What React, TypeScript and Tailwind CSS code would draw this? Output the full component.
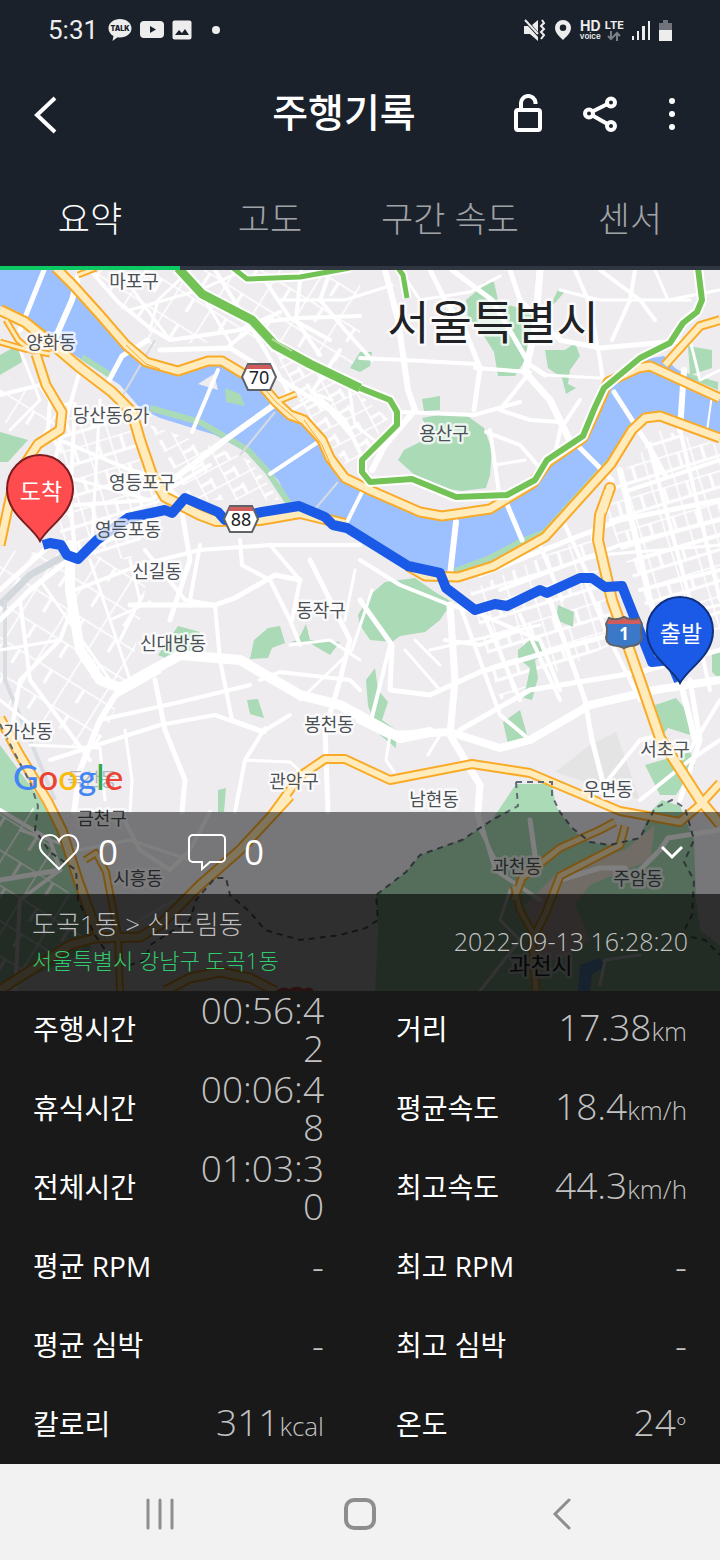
import React, { useState } from 'react';

type Tone = 'major' | 'minor' | 'city';

interface MapLabel {
  text: string;
  x: number;
  y: number;
  tone: Tone;
}

interface Stat {
  label: string;
  value: string;
  unit?: string;
}

const TABS = ['요약', '고도', '구간 속도', '센서'];

const STATS: Stat[] = [
  { label: '주행시간', value: '00:56:42' },
  { label: '거리', value: '17.38', unit: 'km' },
  { label: '휴식시간', value: '00:06:48' },
  { label: '평균속도', value: '18.4', unit: 'km/h' },
  { label: '전체시간', value: '01:03:30' },
  { label: '최고속도', value: '44.3', unit: 'km/h' },
  { label: '평균 RPM', value: '-' },
  { label: '최고 RPM', value: '-' },
  { label: '평균 심박', value: '-' },
  { label: '최고 심박', value: '-' },
  { label: '칼로리', value: '311', unit: 'kcal' },
  { label: '온도', value: '24', unit: '°' },
];

const LABELS: MapLabel[] = [
  { text: '마포구', x: 134, y: 288, tone: 'minor' },
  { text: '양화동', x: 51, y: 349, tone: 'minor' },
  { text: '당산동6가', x: 111, y: 422, tone: 'minor' },
  { text: '영등포구', x: 142, y: 489, tone: 'minor' },
  { text: '영등포동', x: 128, y: 536, tone: 'minor' },
  { text: '용산구', x: 444, y: 440, tone: 'minor' },
  { text: '신길동', x: 157, y: 578, tone: 'minor' },
  { text: '동작구', x: 321, y: 617, tone: 'minor' },
  { text: '신대방동', x: 173, y: 650, tone: 'minor' },
  { text: '가산동', x: 28, y: 738, tone: 'minor' },
  { text: '봉천동', x: 329, y: 731, tone: 'minor' },
  { text: '관악구', x: 294, y: 788, tone: 'minor' },
  { text: '남현동', x: 434, y: 806, tone: 'minor' },
  { text: '우면동', x: 608, y: 796, tone: 'minor' },
  { text: '서초구', x: 665, y: 756, tone: 'minor' },
  { text: '금천구', x: 102, y: 825, tone: 'minor' },
  { text: '시흥동', x: 138, y: 885, tone: 'minor' },
  { text: '과천동', x: 517, y: 873, tone: 'minor' },
  { text: '주암동', x: 638, y: 885, tone: 'minor' },
  { text: '과천시', x: 541, y: 974, tone: 'city' },
  { text: '서울특별시', x: 493, y: 339, tone: 'major' },
];

const LABEL_CLASS: Record<Tone, string> = {
  major: 'fill-[#202124] text-[46px]',
  city: 'fill-[#26272a] text-[23px]',
  minor: 'fill-[#4b5056] text-[18px]',
};

const RIVER =
  'M0 270H58L100 317L140 362L178 373L220 362L255 382L290 417L320 437L333 468L345 482L372 494L440 520L490 511L535 486L548 466L583 442L598 410L612 388L640 360L664 356L675 368L720 396V438L680 421L652 416L637 428L611 464L545 535L520 545L495 560L455 573L410 566L345 526L300 505L290 503L278 480L256 457L215 435L160 418L140 408L120 385L70 352L28 325L0 306Z';

const PARKS = [
  'M404 450L420 442L428 430L422 418L438 415H466L484 428L492 450L490 475L486 488L462 491L440 488L418 478L398 460Z',
  'M422 399L440 396V410L424 411Z',
  'M466 300L478 290L484 282L494 282L498 300L512 306L536 312L525 360L515 376L498 376L494 352L480 330L468 318Z',
  'M550 306L558 290L566 290L556 302Z',
  'M545 350L565 350L575 343L580 356L570 370L568 384L576 388L566 394L562 378L548 368Z',
  'M358 615L370 595L385 582L415 578L435 592L452 602L440 620L425 632L400 636L392 642L370 640L360 625Z',
  'M250 659L254 640L268 628L280 626L285 643L272 648L268 658Z',
  'M290 642L298 640L306 624L310 640L340 642L330 655L308 642Z',
  'M178 626L200 632L196 655L170 660L158 655Z',
  'M247 700L258 699L264 718L250 714Z',
  'M218 790L226 788L224 812H218Z',
  'M518 650L530 640L540 642L545 655L535 660L538 678L532 700L524 698L530 668L518 658Z',
  'M503 722L520 710L528 738L508 744Z',
  'M558 605L574 612L573 627L556 620Z',
  'M366 680L375 668L378 690L388 702L382 720L396 730L396 748L380 735L368 706Z',
  'M655 705L676 698L688 712L690 735L668 728L660 738Z',
  'M712 650H720V680L712 672Z',
  'M645 765L690 752L695 765L676 795H660Z',
  'M690 375L688 346L712 350V368Z',
  'M670 368L718 382V390L674 372Z',
  'M0 355L18 345L22 362L0 375Z',
  'M0 432L28 440L8 462H0Z',
  'M350 368L360 352L372 352L370 366L360 372Z',
  'M0 745L26 780L50 812L60 838L95 930L90 950L0 991Z',
  'M516 784L552 784L556 806L572 830L590 842L610 845L640 838L650 812L662 800L680 806L694 840L696 900L700 930L720 945V991H375L378 930L376 895L406 872L420 855L462 840L492 820Z',
];

// Built-up blocks shown in a slightly different grey or beige
const BLOCKS: [string, string][] = [
  ['M555 772L590 745L616 732L640 800L610 790Z', '#e5e4e5'],
  ['M525 905L560 870L625 850L655 825L650 860L590 885L575 905L590 940L560 960H540Z', '#e4d8cf'],
  ['M580 965L600 958L606 966L592 975L590 991H578Z', '#6ea8e0'],
];

// [path, width]
const STREETS: [string, number][] = [
  // bridges
  ['M44 270L20 330', 5],
  ['M80 270L72 300L50 350', 6],
  ['M148 340L122 356L105 388', 5],
  ['M218 370L192 432', 4],
  ['M288 395L225 440L175 478', 6],
  ['M318 442L270 474', 4],
  ['M362 492L346 524', 4],
  ['M456 522L450 575', 6],
  ['M506 502L522 540', 5],
  ['M578 446L612 480', 5],
  ['M614 392L650 448L665 475', 5],
  ['M684 370L680 430', 6],
  ['M712 395L706 438', 2],
  // north bank
  ['M90 270L118 302L150 328L170 340L240 330L280 312', 4],
  ['M120 270L140 300L170 340', 3],
  ['M130 310L200 290L240 272', 3],
  ['M150 330L158 300L190 270', 3],
  ['M160 350L230 348L330 410L352 435', 5],
  ['M230 345L260 322L300 318L360 316', 4],
  ['M200 292L232 345', 3],
  ['M215 270L262 345L290 395', 4],
  ['M262 276L290 318L330 340', 4],
  ['M300 280L296 320L320 355', 4],
  ['M330 272L320 300L345 330L372 360', 4],
  ['M280 300L345 300L392 285', 3],
  ['M340 350L312 392L345 420L360 452', 4],
  ['M292 410L318 395L332 400', 3],
  ['M348 380L355 425L380 445', 3],
  ['M385 270L398 320L408 390L415 410', 6],
  ['M360 358L405 360L475 364', 4],
  ['M430 270L445 300L465 330L480 368L474 410', 5],
  ['M452 270L492 300L530 365L545 375', 5],
  ['M510 270L520 300L560 340L600 348L690 340', 5],
  ['M540 270L535 330L525 372L550 400L572 445', 7],
  ['M475 368L530 372L500 410L530 420L560 422', 4],
  ['M400 412L474 415L520 402', 4],
  ['M415 410L385 445L372 470', 6],
  ['M490 430L500 500', 4],
  ['M486 432L520 445L540 468', 4],
  ['M495 465L525 460', 3],
  ['M575 270L590 305L600 360L604 388', 4],
  ['M600 270L640 300L655 320', 4],
  ['M560 290L600 300L690 300', 3],
  ['M635 270L630 300L612 340', 4],
  ['M655 270L668 300L720 290', 3],
  ['M580 400L560 430L556 450', 4],
  ['M545 375L600 378', 3],
  ['M690 340L700 380L720 370', 3],
  ['M400 270L420 300L470 292L500 276', 3],
  // west
  ['M0 395L40 385L50 400L48 430L60 450', 4],
  ['M20 350L40 400L10 430', 3],
  ['M80 370L60 440L50 480', 4],
  ['M60 440L130 470L170 480', 4],
  ['M75 405L70 500L75 550', 4],
  ['M100 400L92 540', 3],
  ['M60 475L150 500', 3],
  ['M75 505L150 500L210 465', 4],
  ['M160 480L180 500L190 560L170 620', 5],
  ['M0 620L30 590L75 555L130 530', 5],
  ['M0 590L50 545', 5],
  ['M70 545L70 590L80 650L100 680L120 688L180 655L240 660L300 695L340 705L400 738L430 732', 10],
  ['M120 688L100 720L80 770L74 812', 6],
  ['M75 600L60 640L20 680L10 740', 4],
  ['M20 600L30 680L60 720L90 760', 4],
  ['M40 580L110 680', 3],
  ['M0 650L60 640', 3],
  ['M90 560L110 620L130 680', 3],
  ['M130 560L140 600L120 640', 3],
  ['M75 590L140 565L200 550L270 545L360 545', 4],
  ['M130 605L215 605L235 598L275 575L300 580', 5],
  ['M110 620L150 602', 3],
  ['M145 550L185 600L215 605L220 660L232 720L265 732', 4],
  ['M200 545L190 600', 4],
  ['M240 540L242 565L270 580L290 620L300 645', 4],
  ['M270 545L300 580L292 620', 4],
  ['M310 560L330 600L350 640L340 680L325 730L328 812', 5],
  ['M290 645L330 640L360 660', 3],
  ['M260 680L280 672L350 680L360 690', 4],
  ['M100 720L180 702L250 685', 4],
  ['M110 700L160 672', 3],
  ['M50 760L160 725L215 715L262 732', 4],
  ['M155 680L165 730L185 780L182 812', 5],
  ['M125 730L132 780L130 812', 3],
  ['M265 728L245 760L235 812', 4],
  ['M245 760L290 762L310 780', 3],
  ['M290 715L262 732', 4],
  ['M0 700L50 740', 3],
  ['M30 745L100 748L105 800', 3],
  ['M355 570L345 620', 3],
  ['M300 700L352 650L372 590', 3],
  // south-east
  ['M360 560L400 585L450 605L475 612L540 640L560 690', 4],
  ['M360 600L392 645L390 690L430 695L480 672L555 650L610 635', 5],
  ['M390 645L370 725', 4],
  ['M360 720L390 735L450 732L500 748L530 740L590 705L655 690L720 680', 8],
  ['M450 605L455 680L450 735L480 785L478 812', 7],
  ['M458 600L500 715L530 740', 4],
  ['M480 605L520 700', 4],
  ['M520 615L560 700', 4],
  ['M548 595L585 700L592 740L605 790', 5],
  ['M585 580L610 640L640 700', 4],
  ['M430 650L540 625', 3],
  ['M445 640L480 645L520 630', 4],
  ['M460 730L530 690L640 672L720 650', 5],
  ['M405 650L440 690', 3],
  ['M415 640L440 665', 3],
  ['M480 575L620 520L720 500', 5],
  ['M500 590L620 545L720 520', 4],
  ['M540 545L562 600', 4],
  ['M565 525L590 580', 4],
  ['M620 470L650 600L680 680L695 740', 6],
  ['M650 450L690 600L710 690', 4],
  ['M680 430L720 600', 4],
  ['M630 490L720 460', 4],
  ['M635 560L720 535', 4],
  ['M640 590L720 570', 4],
  ['M650 620L720 605', 3],
  ['M580 560L600 555L720 545', 3],
  ['M690 680L700 740L680 800', 5],
  ['M640 800L690 760L720 740', 4],
  ['M600 790L640 740L660 735', 4],
  ['M720 700L690 750', 4],
  ['M390 735L386 760L394 772', 3],
  ['M440 735L428 755', 3],
  // south
  ['M0 810L50 840L60 870L20 900L15 991', 4],
  ['M0 880L60 870', 5],
  ['M20 830L80 850L130 840L190 860', 3],
  ['M120 812L140 850L170 870L190 850L210 812', 4],
  ['M95 960L140 920L175 900', 3],
  ['M478 812L495 870L540 900', 4],
  ['M530 820L535 855', 5],
  ['M560 880L600 868L625 868', 5],
  ['M640 870L660 850L668 838L720 830', 5],
  ['M480 991L520 940L500 920L510 890', 3],
  ['M600 985L605 960L640 955', 3],
  ['M476 812L480 830L500 868', 3],
];

const HIGHWAYS: [string, number][] = [
  ['M56 268L72 284L100 315L126 345L146 362L178 371L208 361L222 361L242 373L258 381L276 402L290 415L304 420L322 440L330 458L345 478L372 491L420 512L442 516L490 509L533 483L548 462L583 438L596 410L608 382L638 368L650 366L720 398', 7],
  ['M665 365L700 326L720 320', 6],
  ['M408 566L425 576L458 577L493 566L545 537L611 464L632 430L645 418L660 416L720 438', 7],
  ['M610 488L600 515L598 540L612 600L640 680L660 738L700 800L720 824', 8],
  ['M0 310L25 322L45 338L78 366L112 392L132 412L140 440L152 475L165 497L200 515L216 521L260 520L300 513L345 524', 8],
  ['M36 354L46 385L62 412L60 430L38 444L14 480L0 545', 7],
  ['M6 320L18 340L30 350L50 354', 3],
  ['M0 342L28 350', 3],
  ['M78 275L96 268', 3],
  ['M276 402L296 394', 3],
  ['M0 718L18 752L48 802L62 830L78 880L98 935', 7],
  ['M290 796L240 850L200 885L160 925L140 937L95 938L70 945L0 990', 7],
  ['M268 820L300 776L325 759L345 759L390 780L472 764L530 773L620 811L680 822L700 805L720 783', 6],
  ['M85 860L96 853L106 872L118 935L120 991', 4],
  ['M165 991L190 978L220 972L250 978L275 991', 7],
  ['M514 900L522 878L560 848L600 830L615 822', 5],
  ['M514 886L520 910L534 935', 4],
  ['M625 826L620 845L560 876L545 915L532 940L536 991', 5],
];

const GREENWAYS: [string, number][] = [
  ['M178 268L202 294L252 320L275 345L310 364L360 388', 9],
  ['M360 388L390 400L397 412V425L362 460V472L370 482L412 479L456 497L507 495L535 480L547 460L583 436L595 407L604 388L640 358L670 343L683 323L697 312L702 300L698 268', 6],
  ['M233 268L247 279L300 277L350 268', 5],
  ['M398 268L403 275L407 298', 5],
];

const BORDERS =
  'M516 782H552V796L560 812L572 828L590 842L610 845L640 838L655 808L672 800L685 808L694 840L684 862L694 880L692 915L682 935L705 940L720 955M516 782L518 806L492 820L462 840L420 855L406 872L376 895L378 920L366 928L340 935L300 940L265 930L250 912L230 895L226 878L215 878L196 900L190 920L150 945L145 960L130 965M0 724L14 752L30 782L38 806L35 830L50 852L76 870L78 900L95 935L105 950';

const ROUTE =
  'M43 545L50 543L61 545L67 555L78 559L97 540L128 518L165 510L172 513L185 498L218 512L225 520L262 512L299 506L325 517L333 525L347 528L408 566L440 573L446 588L475 610L495 604L507 606L540 590L547 593L580 578L592 578L605 587L622 586L652 662L670 660L679 681';

function RouteMap() {
  return (
    <svg viewBox="0 270 720 721" className="block w-full" role="img" aria-label="주행 경로 지도">
      <defs>
        <pattern id="blocks-a" width="26" height="19" patternUnits="userSpaceOnUse" patternTransform="rotate(-28)">
          <path d="M0 0H26M0 0V19M13 8V19M0 11H13" fill="none" stroke="#fff" strokeWidth="3" />
        </pattern>
        <pattern id="blocks-b" width="24" height="30" patternUnits="userSpaceOnUse" patternTransform="rotate(-17)">
          <path d="M0 0H24M0 0V30M12 0V16M0 16H24" fill="none" stroke="#fff" strokeWidth="3" />
        </pattern>
        <pattern id="blocks-c" width="38" height="30" patternUnits="userSpaceOnUse" patternTransform="rotate(32)">
          <path d="M0 0H38M0 0V30M19 0V16" fill="none" stroke="#fff" strokeWidth="3" />
        </pattern>
      </defs>

      <rect x="0" y="270" width="720" height="721" fill="#efecf0" />

      {/* Dense street grids */}
      <path d="M60 400L125 410L160 500L130 560L60 550Z" fill="url(#blocks-b)" />
      <path d="M150 425L250 460L280 500L190 500Z" fill="url(#blocks-a)" />
      <path d="M0 370L60 420L40 440L0 420Z" fill="url(#blocks-c)" />
      <path d="M0 550L150 560L130 680L90 760L0 700Z" fill="url(#blocks-c)" />
      <path d="M90 270H360V370L270 340L150 345Z" fill="url(#blocks-c)" />
      <path d="M600 500L660 430L720 445V640H660Z" fill="url(#blocks-b)" />
      <path d="M470 590L600 530L620 640L500 700Z" fill="url(#blocks-b)" />
      <path d="M270 350L360 395L390 420L350 470L310 420Z" fill="url(#blocks-a)" />

      {PARKS.map((d) => (
        <path key={d} d={d} fill="#abdab7" />
      ))}
      {BLOCKS.map(([d, fill]) => (
        <path key={d} d={d} fill={fill} />
      ))}
      <path d="M0 812L30 800L60 870L90 950L0 985Z" fill="url(#blocks-c)" />
      <path d={RIVER} fill="#9dc1ff" />
      <path d="M150 408L200 422L248 450L268 472M82 357L110 375M268 472L290 505M455 571L490 558L520 542L545 532L608 462" fill="none" stroke="#abdab7" strokeWidth="6" />
      <path d="M225 388L240 394L245 406L226 402Z" fill="#abdab7" />
      <path d="M198 384L214 374L218 390Z" fill="#efecf0" />
      <path d="M155 340L120 400M275 412L240 455M338 482L310 515" fill="none" stroke="#d5dbe0" strokeWidth="2" />

      {/* Railways */}
      <path d="M0 605L30 575L75 550" fill="none" stroke="#d3d8dd" strokeWidth="7" />
      <path d="M5 600V680L30 740L55 800" fill="none" stroke="#d9dde2" strokeWidth="4" />

      <g fill="none" stroke="#fff" strokeLinejoin="round" strokeLinecap="round">
        {STREETS.map(([d, width]) => (
          <path key={d} d={d} strokeWidth={width} />
        ))}
      </g>

      <g fill="none" stroke="#f9ab28" strokeLinejoin="round">
        {HIGHWAYS.map(([d, width]) => (
          <path key={d} d={d} strokeWidth={width + 4} />
        ))}
      </g>
      <g fill="none" stroke="#ffebbb" strokeLinejoin="round">
        {HIGHWAYS.map(([d, width]) => (
          <path key={d} d={d} strokeWidth={width} />
        ))}
      </g>
      <path d="M126 345L146 364L160 369M258 381L276 402L304 426M304 420L322 445L332 468" fill="none" stroke="#f9ab28" strokeWidth="1" />
      <circle cx="610" cy="488" r="5" fill="#ffebbb" stroke="#f9ab28" strokeWidth="2" />
      <path d="M609 490L602 512" stroke="#ffebbb" strokeWidth="8" />

      <g fill="none" strokeLinejoin="round">
        {GREENWAYS.map(([d, width]) => (
          <path key={d} d={d} strokeWidth={width + 4} stroke="#fff" />
        ))}
        {GREENWAYS.map(([d, width]) => (
          <path key={d} d={d} strokeWidth={width} stroke="#72c256" />
        ))}
      </g>
      <path d="M272 339L292 351" stroke="#b9dfa8" strokeWidth="2" />

      <path d={BORDERS} fill="none" stroke="#5f6a72" strokeWidth="2" strokeDasharray="6 5" />

      <path d={ROUTE} fill="none" stroke="#1b5ae6" strokeWidth="10" strokeLinejoin="round" />

      {/* Road shields */}
      <g stroke="#5f6368" strokeWidth="2">
        <path d="M248 364H270L276 377L270 390H248L242 377Z" fill="#fff" />
        <path d="M230 506H252L258 519L252 532H230L224 519Z" fill="#fff" />
      </g>
      <path d="M248 365H270L272 369H246ZM230 507H252L254 511H228Z" fill="#d05c5c" />
      <g textAnchor="middle" className="fill-[#202124] font-['Noto_Sans',sans-serif] text-[18px]">
        <text x="259" y="384">70</text>
        <text x="241" y="526">88</text>
      </g>
      <path d="M609 618Q616 621 624 617Q632 621 639 618L642 624Q640 630 642 638Q640 646 630 646Q626 647 624 648Q622 647 618 646Q607 646 606 638Q608 630 606 624Z" fill="#3b78c8" stroke="#5f6368" strokeWidth="2" />
      <path d="M609 619Q616 622 624 618Q632 622 639 619L641 624H607Z" fill="#d05c5c" />
      <text x="624" y="640" textAnchor="middle" className="fill-white font-['Noto_Sans',sans-serif] text-[17px] font-bold">1</text>
      <path d="M276 991Q282 985 290 989Q296 984 304 989Q310 985 314 991Z" fill="#d05c5c" />

      <g textAnchor="middle" stroke="#fff" strokeOpacity="0.75" strokeWidth="5" strokeLinejoin="round" paintOrder="stroke">
        {LABELS.map((label) => (
          <text key={label.text} x={label.x} y={label.y} className={LABEL_CLASS[label.tone]}>
            {label.text}
          </text>
        ))}
      </g>

      {/* Finish and start pins */}
      <path d="M40 541C32 526 7 514 7 489A33 34 0 0 1 73 489C73 514 48 526 40 541Z" fill="#ff4c4f" stroke="#7a1d20" strokeWidth="2" />
      <path d="M680 683C672 668 647 656 647 631A33 34 0 0 1 713 631C713 656 688 668 680 683Z" fill="#1b5ae6" stroke="#10307c" strokeWidth="2" />
      <g textAnchor="middle" className="fill-white text-[23px]">
        <text x="41" y="500">도착</text>
        <text x="681" y="642">출발</text>
      </g>

      <text x="92" y="786" textAnchor="middle" className="fill-[#b3b5b8] text-[18px]">독산동</text>
      <text x="13" y="790" className="font-['Lato',sans-serif] text-[35px] font-medium">
        <tspan fill="#4285f4">G</tspan>
        <tspan fill="#ea4335">o</tspan>
        <tspan fill="#fbbc05">o</tspan>
        <tspan fill="#4285f4">g</tspan>
        <tspan fill="#34a853">l</tspan>
        <tspan fill="#ea4335">e</tspan>
      </text>
    </svg>
  );
}

function StatusBar() {
  return (
    <div className="flex h-[60px] items-center justify-between px-12 text-[#ededed]">
      <div className="flex items-center gap-2">
        <span className="w-[52px] font-['Roboto',sans-serif] text-[26px] leading-none">5:31</span>
        <svg width="24" height="24" viewBox="0 0 24 24" fill="currentColor">
          <path d="M12 1C5.600 1 .5 5 .5 10.300c0 3.400 2 6.200 5 7.800l-1 4.900 5-3.700c.8.200 1.600.2 2.500.2 6.400 0 11.500-4 11.500-9.200S18.400 1 12 1z" />
          <text x="12" y="13" textAnchor="middle" className="fill-[#1b212b] font-['Inter',sans-serif] text-[7px] font-black">TALK</text>
        </svg>
        <svg width="24" height="18" viewBox="0 0 24 18">
          <rect width="24" height="17" rx="4" fill="currentColor" />
          <path d="M10 5v7l6-3.500z" fill="#1b212b" />
        </svg>
        <svg width="20" height="20" viewBox="0 0 20 20">
          <rect x="0.500" y="0.500" width="19" height="19" rx="2" fill="currentColor" />
          <path d="M3 15l4-5 3 3 3-4 4 6z" fill="#1b212b" />
        </svg>
        <span className="ml-3 size-2 rounded-full bg-current" />
      </div>
      <div className="flex items-center gap-2">
        <svg width="22" height="22" viewBox="0 0 22 22" fill="currentColor">
          <path d="M0 7h4l10 11v4L6 15H0zM14 1v12L8 6z" />
          <path d="M1 1l13 14" stroke="currentColor" strokeWidth="2" />
          <path d="M18 1l2 3-3 3 3 3-3 3 3 3-3 4" fill="none" stroke="currentColor" strokeWidth="2" />
        </svg>
        <svg width="18" height="22" viewBox="0 0 18 22">
          <path fillRule="evenodd" fill="currentColor" d="M9 1a8 8 0 0 0-8 8c0 5 5 9 8 12 3-3 8-7 8-12a8 8 0 0 0-8-8zm0 4.500a3 3 0 1 1 0 6.500 3 3 0 0 1 0-6.500z" />
        </svg>
        <span className="flex flex-col items-center font-['Inter',sans-serif]">
          <span className="text-[14px] leading-[12px] font-bold">HD</span>
          <span className="text-[8px] leading-[8px] font-semibold">voice</span>
        </span>
        <span className="-ml-1 flex flex-col items-center font-['Inter',sans-serif]">
          <span className="text-[11px] leading-[11px] font-bold">LTE</span>
          <svg width="14" height="10" viewBox="0 0 14 10" fill="none" stroke="#7b7f86" strokeWidth="2">
            <path d="M4 0v8M1 5l3 3 3-3M10 10V2M7 5l3-3 3 3" />
          </svg>
        </span>
        <svg width="19" height="20" viewBox="0 0 19 20" fill="currentColor">
          <path d="M0 16h2v4H0zM5 11h2v9H5zM10 6h3v14h-3zM16 1h2v19h-2z" />
        </svg>
        <svg width="13" height="21" viewBox="0 0 13 21">
          <path d="M4 0h5v3h4v8H0V3h4z" fill="#707379" />
          <path d="M0 10h13v11H0z" fill="currentColor" />
        </svg>
      </div>
    </div>
  );
}

function TitleBar() {
  return (
    <div className="grid h-[108px] grid-cols-[196px_1fr_216px] items-center pr-3 text-white">
      <button aria-label="뒤로" className="ml-6 size-11">
        <svg width="44" height="44" viewBox="0 0 44 44" fill="none" stroke="currentColor" strokeWidth="4">
          <path d="M31 6L13 23l18 17" />
        </svg>
      </button>
      <h1 className="pb-1 text-center text-[39px] font-medium whitespace-nowrap">주행기록</h1>
      <div className="grid grid-cols-3 justify-items-center">
        <button aria-label="잠금">
          <svg width="40" height="40" viewBox="0 0 40 40" fill="none" stroke="currentColor" strokeWidth="4">
            <rect x="8" y="16" width="24" height="20" rx="2" />
            <path d="M13 16v-6a7 7 0 0 1 14.500-1.500V10" />
          </svg>
        </button>
        <button aria-label="공유">
          <svg width="40" height="40" viewBox="0 0 40 40" fill="none" stroke="currentColor" strokeWidth="4">
            <circle cx="9" cy="19.500" r="4" />
            <circle cx="31" cy="8.500" r="4" />
            <circle cx="31" cy="32" r="4" />
            <path d="M12.500 17.500l15-7.500M12.500 21.500l15 8.500" />
          </svg>
        </button>
        <button aria-label="더보기">
          <svg width="40" height="40" viewBox="0 0 40 40" fill="currentColor">
            <circle cx="20" cy="7" r="3" />
            <circle cx="20" cy="20" r="3" />
            <circle cx="20" cy="33" r="3" />
          </svg>
        </button>
      </div>
    </div>
  );
}

function StatRow({ label, value, unit }: Stat) {
  return (
    <div className="flex items-center justify-between pb-0.5">
      <dt className="text-[28px] leading-[38px] whitespace-nowrap text-white">{label}</dt>
      <dd className="w-[140px] text-right text-[37px] leading-[38px] font-light break-all text-[#c2c2c2]">
        {value}
        {unit && <span className="text-[26px]">{unit}</span>}
      </dd>
    </div>
  );
}

export default function App() {
  const [tab, setTab] = useState(0);

  return (
    <div className="flex min-h-screen flex-col bg-[#191919] font-['Open_Sans','Noto_Sans_CJK_KR',sans-serif]">
      <header className="bg-[#1b212b]">
        <StatusBar />
        <TitleBar />
        <nav className="grid h-[102px] grid-cols-4">
          {TABS.map((name, i) => (
            <button
              key={name}
              onClick={() => setTab(i)}
              className={`border-b-4 pt-1 text-[35px] font-light ${
                tab === i ? 'border-[#0cc963] text-white' : 'border-[#2f3641] text-[#a0a3a8]'
              }`}
            >
              {name}
            </button>
          ))}
        </nav>
      </header>

      <section className="relative overflow-hidden">
        <RouteMap />
        <div className="absolute inset-x-0 bottom-0">
          <div className="flex h-[82px] items-center justify-between bg-black/50 pr-9 pl-[38px] text-white">
            <div className="flex items-center gap-[70px] pb-0.5 text-[35px] leading-9">
              <button className="flex items-center gap-[18px]" aria-label="좋아요">
                <svg width="42" height="38" viewBox="0 0 42 38" fill="none" stroke="currentColor" strokeWidth="2">
                  <path d="M21 36L5 20C-1 14 2 2 12 2c4 0 7 2 9 6 2-4 5-6 9-6 10 0 13 12 7 18z" />
                </svg>
                0
              </button>
              <button className="flex items-center gap-[18px]" aria-label="댓글">
                <svg width="38" height="38" viewBox="0 0 38 38" fill="none" stroke="currentColor" strokeWidth="2">
                  <path d="M5 2h28a4 4 0 0 1 4 4v19a4 4 0 0 1-4 4H22l-8 7v-7H5a4 4 0 0 1-4-4V6a4 4 0 0 1 4-4z" />
                </svg>
                0
              </button>
            </div>
            <button aria-label="펼치기">
              <svg width="24" height="16" viewBox="0 0 24 16" fill="none" stroke="currentColor" strokeWidth="3">
                <path d="M2 2l10 10L22 2" />
              </svg>
            </button>
          </div>
          <div className="flex h-[97px] items-center justify-between bg-black/80 px-8 pb-0.5 font-light">
            <div className="whitespace-nowrap">
              <p className="text-[26px] leading-9 text-[#bdbdbd]">도곡1동 &gt; 신도림동</p>
              <p className="text-[22px] leading-9 text-[#2fcb6c]">서울특별시 강남구 도곡1동</p>
            </div>
            <time className="text-[25px] text-[#c2c2c2]">2022-09-13 16:28:20</time>
          </div>
        </div>
      </section>

      <dl className="grid flex-1 grid-cols-2 grid-rows-6 gap-x-[72px] px-[33px]">
        {STATS.map((stat) => (
          <StatRow key={stat.label} {...stat} />
        ))}
      </dl>

      <footer className="grid h-24 grid-cols-3 place-items-center bg-[#f2f2f2] px-[60px] pt-1 text-[#8e8e8e]">
        <button aria-label="최근 앱">
          <svg width="36" height="36" viewBox="0 0 36 36" stroke="currentColor" strokeWidth="3" strokeLinecap="round">
            <path d="M6 4v28M18 4v28M30 4v28" />
          </svg>
        </button>
        <button aria-label="홈">
          <svg width="36" height="36" viewBox="0 0 36 36" fill="none" stroke="currentColor" strokeWidth="4">
            <rect x="4" y="4" width="28" height="28" rx="8" />
          </svg>
        </button>
        <button aria-label="뒤로 가기">
          <svg width="36" height="36" viewBox="0 0 36 36" fill="none" stroke="currentColor" strokeWidth="3" strokeLinecap="round">
            <path d="M27 4L13 18l14 14" />
          </svg>
        </button>
      </footer>
    </div>
  );
}
